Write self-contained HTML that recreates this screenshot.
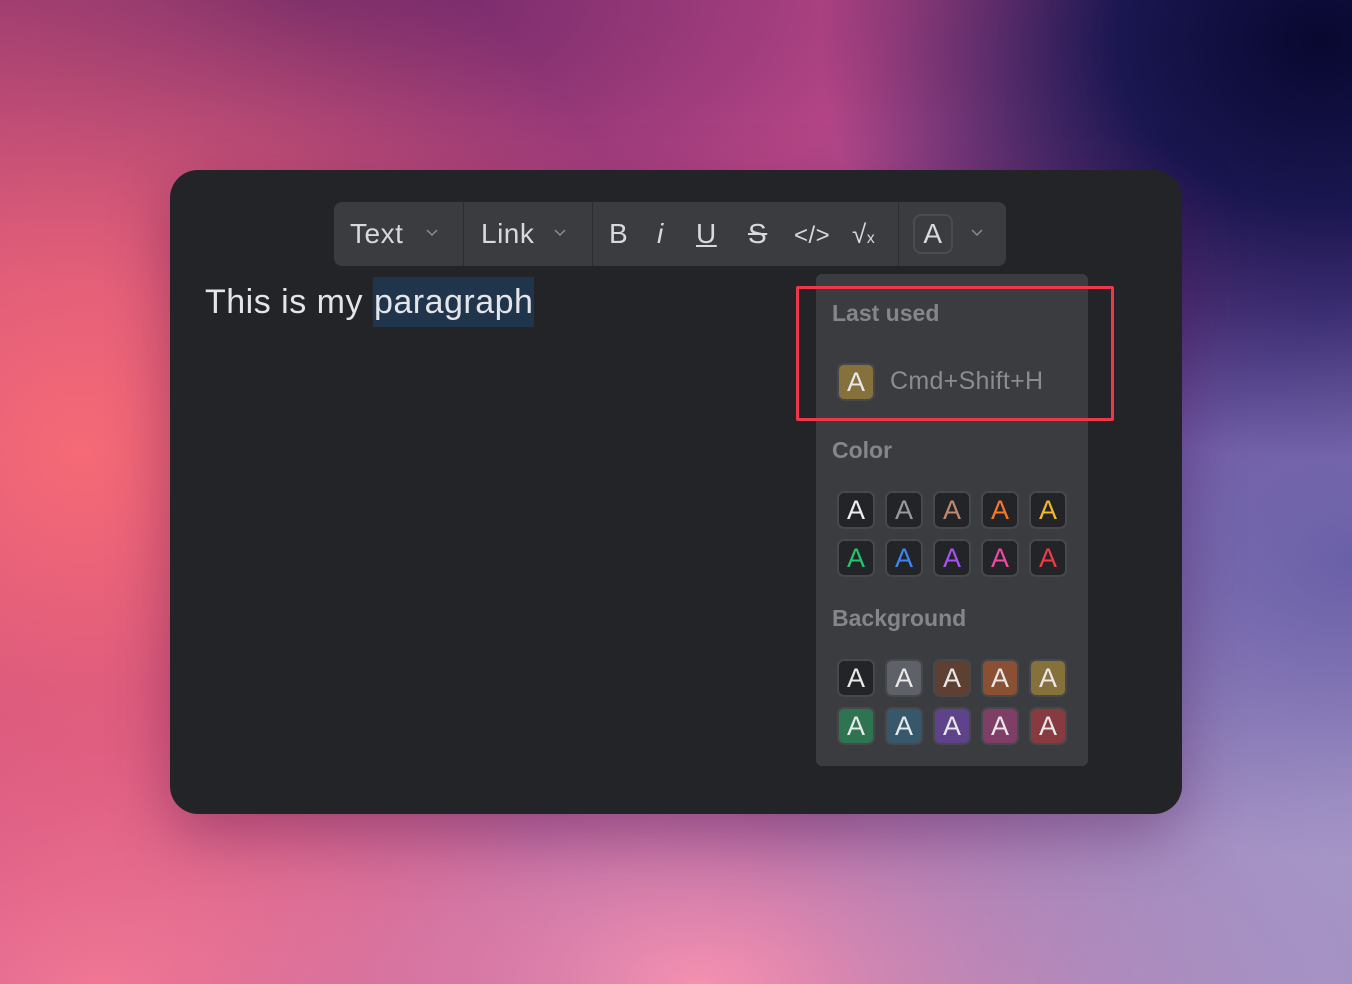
<!DOCTYPE html>
<html><head><style>
*{margin:0;padding:0;box-sizing:border-box}
body{width:1352px;height:984px;overflow:hidden;font-family:"Liberation Sans",sans-serif;position:relative;
background:
radial-gradient(ellipse 500px 420px at 1320px 40px,#080830 0%,#1a1650 40%,rgba(40,30,100,0) 100%),
radial-gradient(ellipse 400px 300px at 1352px 560px,#6a60a8 0%,rgba(106,96,168,0) 100%),
radial-gradient(ellipse 600px 500px at 1352px 800px,#a898c8 0%,rgba(160,140,200,0) 100%),
radial-gradient(ellipse 600px 600px at 80px 450px,#f66a76 0%,rgba(240,100,110,0) 100%),
radial-gradient(ellipse 700px 300px at 300px 0px,#6a2668 0%,rgba(106,38,104,0) 100%),
radial-gradient(ellipse 500px 300px at 100px 984px,#f07898 0%,rgba(240,120,150,0) 100%),
radial-gradient(ellipse 700px 400px at 700px 984px,#f590b0 0%,rgba(240,140,170,0) 100%),
linear-gradient(135deg,#b0407a 0%,#c04a8a 40%,#6a4aa0 70%,#9a88c0 100%);}
.panel{position:absolute;left:170px;top:170px;width:1012px;height:644px;background:#232428;border-radius:28px;box-shadow:0 20px 60px rgba(60,0,60,.35)}
.tb{position:absolute;left:334px;top:202px;width:672px;height:64px;background:#3a3c40;border-radius:8px;color:#d8d9dc;font-size:28px;letter-spacing:0.5px}
.tb span{position:absolute;top:16px;line-height:32px}
.sep{position:absolute;top:0;width:1px;height:64px;background:#2c2d31}
.chev{position:absolute;top:24px;width:12px;height:12px}
.para{position:absolute;left:205px;top:277px;font-size:34px;color:#e4e5e8;line-height:50px;letter-spacing:0.5px}
.para b{font-weight:normal;background:#20344c;padding:0 1px;display:inline-block;line-height:50px}
.dd{position:absolute;left:816px;top:274px;width:272px;height:492px;background:#3a3c40;border-radius:6px}
.lbl{position:absolute;left:832px;font-size:23px;font-weight:bold;color:#84868a}
.sw{position:absolute;width:38px;height:38px;border-radius:7px;border:2px solid #46484c;font-size:27px;text-align:center;line-height:34px;color:#e8e8e8}
.red{position:absolute;left:796px;top:286px;width:318px;height:135px;border:3px solid #f0364a;border-radius:2px}
</style></head><body>
<div class="panel"></div>
<div class="tb">
<span style="left:16px">Text</span>
<svg class="chev" style="left:92px" viewBox="0 0 12 12"><path d="M1 4l5 5 5-5" fill="none" stroke="#8a8c90" stroke-width="1.5"/></svg>
<div class="sep" style="left:129px"></div>
<span style="left:147px">Link</span>
<svg class="chev" style="left:220px" viewBox="0 0 12 12"><path d="M1 4l5 5 5-5" fill="none" stroke="#8a8c90" stroke-width="1.5"/></svg>
<div class="sep" style="left:258px"></div>
<span style="left:275px">B</span>
<span style="left:323px;font-style:italic">i</span>
<span style="left:362px;text-decoration:underline">U</span>
<span style="left:414px;text-decoration:line-through">S</span>
<span style="left:460px;font-size:24px;top:18px">&lt;/&gt;</span>
<span style="left:518px;font-size:26px">√<small style="font-size:16px">x</small></span>
<div class="sep" style="left:564px"></div>
<div style="position:absolute;left:579px;top:12px;width:40px;height:40px;border:2px solid #4a4c50;border-radius:8px;text-align:center;line-height:36px">A</div>
<svg class="chev" style="left:637px" viewBox="0 0 12 12"><path d="M1 4l5 5 5-5" fill="none" stroke="#8a8c90" stroke-width="1.5"/></svg>
</div>
<div class="para">This is my <b>paragraph</b></div>
<div class="dd"></div>
<div class="lbl" style="top:300px">Last used</div>
<div class="sw" style="left:837px;top:363px;background:#86703c">A</div>
<div style="position:absolute;left:890px;top:367px;font-size:25px;color:#8a8c90;letter-spacing:0.3px">Cmd+Shift+H</div>
<div class="lbl" style="top:437px">Color</div>
<div class="lbl" style="top:605px">Background</div>
<div class="sw" style="left:837px;top:491px;background:#232428;color:#eee">A</div>
<div class="sw" style="left:885px;top:491px;background:#232428;color:#9a9a9a">A</div>
<div class="sw" style="left:933px;top:491px;background:#232428;color:#c08a70">A</div>
<div class="sw" style="left:981px;top:491px;background:#232428;color:#f7782a">A</div>
<div class="sw" style="left:1029px;top:491px;background:#232428;color:#f2b72a">A</div>
<div class="sw" style="left:837px;top:539px;background:#232428;color:#22c56a">A</div>
<div class="sw" style="left:885px;top:539px;background:#232428;color:#3a86f0">A</div>
<div class="sw" style="left:933px;top:539px;background:#232428;color:#a552f0">A</div>
<div class="sw" style="left:981px;top:539px;background:#232428;color:#ee4aa0">A</div>
<div class="sw" style="left:1029px;top:539px;background:#232428;color:#f03a44">A</div>
<div class="sw" style="left:837px;top:659px;background:#232428">A</div>
<div class="sw" style="left:885px;top:659px;background:#5f6168">A</div>
<div class="sw" style="left:933px;top:659px;background:#5e4032">A</div>
<div class="sw" style="left:981px;top:659px;background:#8a5034">A</div>
<div class="sw" style="left:1029px;top:659px;background:#86703c">A</div>
<div class="sw" style="left:837px;top:707px;background:#2e7450">A</div>
<div class="sw" style="left:885px;top:707px;background:#37586a">A</div>
<div class="sw" style="left:933px;top:707px;background:#5e428a">A</div>
<div class="sw" style="left:981px;top:707px;background:#7e3e66">A</div>
<div class="sw" style="left:1029px;top:707px;background:#873a40">A</div>
<div class="red"></div>
</body></html>
